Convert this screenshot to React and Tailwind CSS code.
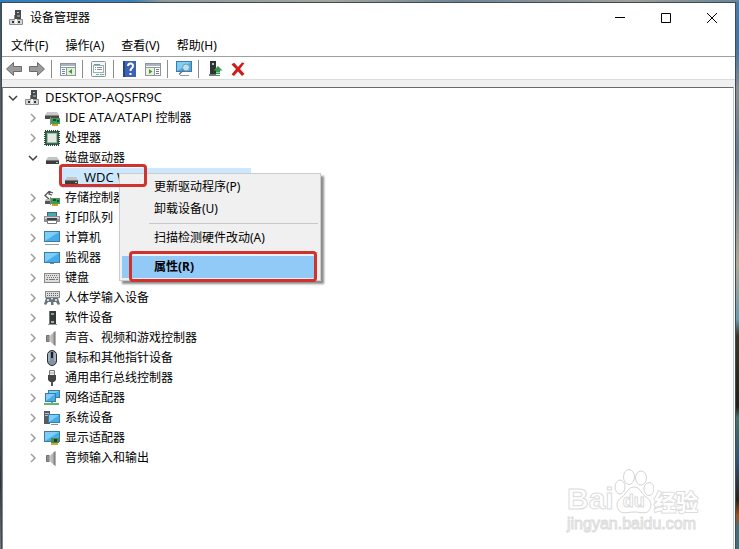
import React from "react";

function Icon({ children, size = "h-4 w-4" }) {
  return (
    <svg viewBox="0 0 16 16" className={`${size} shrink-0`} aria-hidden="true">
      {children}
    </svg>
  );
}

const Board = () => (
  <g>
    <path d="M7 8h9v6H7z" fill="#3f9a55" />
    <path d="M9 9h3v2H9zM13 10h2v2h-2z" fill="#1c4f2c" />
    <path d="M8 14h6v2H8z" fill="#c9a227" />
    <path d="M6 7h1v8H6z" fill="#8a8a8a" />
  </g>
);

const Screen = ({ x = 0, y = 2, w = 16, h = 10 }) => (
  <g>
    <rect x={x + 0.5} y={y + 0.5} width={w - 1} height={h - 1} fill="#45aeea" stroke="#3b7ba5" />
    <path d={`M${x + 1} ${y + h - 1}L${x + w - 1} ${y + 1}H${x + 1}z`} fill="#7fcdf7" />
  </g>
);

const Drive = () => (
  <g>
    <path d="M4 7h9l2 3H2z" fill="#c4c4c4" />
    <path d="M2 10h13v4H2z" fill="#3d3d3d" />
    <path d="M2 10h13v1H2z" fill="#777" />
    <path d="M12 12h2v1h-2z" fill="#8fe08f" />
  </g>
);

const icons = {
  computer: (
    <g>
      <path d="M7 0h6v9H7z" fill="#454b4b" />
      <path d="M9 2h2v1H9z" fill="#bfc9c5" />
      <path d="M9 5h3v2H9z" fill="#7f8c88" />
      <path d="M5 5h1v5h1V5z" fill="#888" />
      <path d="M1.500 9.500h13v5h-13z" fill="#d4d6d6" stroke="#8b8e8e" />
      <path d="M4 11h2v2H4zM10 11h2v2h-2z" fill="#333" />
      <path d="M7 9h2v5H7z" fill="#f4f4f4" />
    </g>
  ),
  ide: (
    <g>
      <path d="M3 2h10l2 3H1z" fill="#c9c9c9" />
      <path d="M1 5h14v4H1z" fill="#4a4a4a" />
      <path d="M1 5h14v1H1z" fill="#888" />
      <Board />
    </g>
  ),
  cpu: (
    <g>
      <rect x="1" y="1" width="14" height="14" fill="#396b50" />
      <rect x="1" y="1" width="14" height="14" fill="none" stroke="#244b37" strokeWidth="2" strokeDasharray="1 1" />
      <rect x="3.500" y="3.500" width="9" height="9" fill="#e4ebe5" stroke="#a7b9ab" />
    </g>
  ),
  drive: <Drive />,
  storage: (
    <g>
      <path d="M9 3L5 1.500 1 5.500l4 3.500M6 1l-1 3 3 1" fill="none" stroke="#555" strokeWidth="1.300" />
      <path d="M2 9h8l1 2H1z" fill="#bbb" />
      <path d="M1 11h8v3H1z" fill="#555" />
      <Board />
    </g>
  ),
  printer: (
    <g>
      <path d="M3 2h10v4H3z" fill="#5a6065" />
      <path d="M4 3h8v4H4z" fill="#3cafb1" />
      <path d="M0 6h16v6H0z" fill="#8b9094" />
      <path d="M1 7h14v2H1z" fill="#d3d6d8" />
      <path d="M3 8h10v2H3z" fill="#3e4246" />
      <path d="M3.500 10.500h9v3h-9z" fill="#fff" stroke="#777" />
    </g>
  ),
  pc: (
    <g>
      <Screen x={0} y={1} w={16} h={11} />
      <path d="M1 14h14v1H1z" fill="#929da5" />
    </g>
  ),
  monitor: (
    <g>
      <Screen x={0} y={2} w={16} h={11} />
      <path d="M6 13h4v1H6z" fill="#7b8b96" />
    </g>
  ),
  keyboard: (
    <g>
      <rect x=".5" y="3.500" width="15" height="9" fill="#dedede" stroke="#888" />
      <path d="M2 5.500h12M3 7.500h11" stroke="#777" strokeDasharray="1 1" />
      <path d="M2 9.500h2m1 0h6m1 0h2" stroke="#777" />
    </g>
  ),
  hid: (
    <g>
      <rect x="1.500" y="1.500" width="14" height="6" fill="#ddd" stroke="#888" />
      <path d="M3 3.500h11M3 5.500h11" stroke="#666" strokeDasharray="1 1" />
      <path d="M2 8h5l1 2 1-2h5l2 6-2 1-2-3H9.500v3H7v-3H4l-2 3-2-1z" fill="#69747c" />
      <path d="M3 9h2v2H3zM11 9h2v2h-2z" fill="#d2dbe0" />
    </g>
  ),
  software: (
    <g>
      <path d="M5 1h7v13H5z" fill="#353a39" />
      <path d="M5 1h1v13H5z" fill="#777" />
      <path d="M7 3h3v2H7z" fill="#77a98b" />
      <path d="M7 11h3v2H7z" fill="#a2b3aa" />
      <path d="M4 14h9v1H4z" fill="#999" />
    </g>
  ),
  speaker: (
    <g>
      <path d="M2.500 5.500h3v6h-3z" fill="#8c8c8c" stroke="#707070" />
      <path d="M6 5.500L11.500 1v15L6 11.500z" fill="#b9b9b9" />
      <path d="M9.500 2.600l2-1.600v15l-2-1.600z" fill="#868686" />
      <path d="M6 5v7" stroke="#e0e0e0" />
    </g>
  ),
  mouse: (
    <g>
      <rect x="3.500" y=".5" width="9" height="15" rx="4.500" fill="#8493a3" stroke="#25303a" />
      <path d="M5 3v8M11 3v8" stroke="#c2ccd5" />
      <path d="M8 2v6" stroke="#182027" strokeWidth="2" />
    </g>
  ),
  usb: (
    <g>
      <path d="M5.500.5h5v5h-5z" fill="#eee" stroke="#777" />
      <path d="M6.500 2.500h1v1h-1zM8.500 2.500h1v1h-1z" fill="#555" />
      <path d="M4 5h8v5l-2 2H6l-2-2z" fill="#444" />
      <path d="M7 12h2v4H7z" fill="#555" />
    </g>
  ),
  network: (
    <g>
      <Screen x={4} y={0} w={12} h={8} />
      <Screen x={1} y={3} w={11} h={9} />
      <path d="M7 12h2v1h6v2H0v-2h7z" fill="#62b575" />
    </g>
  ),
  system: (
    <g>
      <path d="M0 1h6v13H0z" fill="#555d62" />
      <path d="M1 3h4v1H1zM1 5h4v1H1z" fill="#b4bec4" />
      <Screen x={4} y={4} w={12} h={9} />
      <path d="M7 14h7v1H7z" fill="#82909a" />
    </g>
  ),
  display: (
    <g>
      <Screen x={0} y={1} w={16} h={11} />
      <path d="M7 8h8v5H7z" fill="#458d4d" />
      <path d="M10 9h3v3h-3z" fill="#213d28" />
      <path d="M7 13h7v2H7z" fill="#cda936" />
    </g>
  ),
};

const arrowShape = "M.5 8l7-6.500v4h8v5h-8v4z";

const toolbar = [
  [
    { label: "后退", art: <path d={arrowShape} fill="#9b9b9b" stroke="#6b6b6b" /> },
    { label: "前进", art: <path d={arrowShape} transform="matrix(-1 0 0 1 16 0)" fill="#9b9b9b" stroke="#6b6b6b" /> },
  ],
  [
    {
      label: "显示/隐藏控制台树",
      art: (
        <g>
          <rect x=".5" y="2.500" width="15" height="12" fill="#fff" stroke="#8c969e" />
          <path d="M1 3h14v2H1z" fill="#a9b4bd" />
          <path d="M1 6.500h14M6.500 7v7" stroke="#8c969e" />
          <path d="M2 8.500h3M2 10.500h3M2 12.500h3" stroke="#6488aa" />
          <path d="M7 7h8v7H7z" fill="#e5f0d9" />
          <path d="M12 8v5L8.500 10.500z" fill="#4b963c" />
        </g>
      ),
    },
  ],
  [
    {
      label: "属性",
      art: (
        <g>
          <rect x=".5" y=".5" width="14" height="15" rx="1" fill="#f4f6f7" stroke="#87939b" />
          <rect x="2.500" y="4.500" width="10" height="7" fill="#fff" stroke="#a1adb5" />
          <path d="M3 3.500h6M4 6.500h1m1 0h5M4 8.500h1m1 0h5" stroke="#7d929f" />
          <path d="M5 13.500h3m1 0h4" stroke="#6eb2a2" />
        </g>
      ),
    },
  ],
  [
    {
      label: "帮助",
      art: (
        <g>
          <path d="M1 0h13v16H1z" fill="#3c61b5" />
          <path d="M1 0h2v16H1z" fill="#274483" />
          <path d="M6 5q0-2.500 2.500-2.500T11 5Q11 6.500 9.500 7.500 8.500 8.300 8.500 10" fill="none" stroke="#fff" strokeWidth="2" />
          <path d="M7.500 12h2v2h-2z" fill="#fff" />
        </g>
      ),
    },
    {
      label: "显示/隐藏操作窗格",
      art: (
        <g>
          <rect x=".5" y="2.500" width="15" height="12" fill="#fff" stroke="#8c969e" />
          <path d="M1 3h14v2H1z" fill="#a9b4bd" />
          <path d="M1 6.500h14M9.500 7v7" stroke="#8c969e" />
          <path d="M11 8.500h3M11 10.500h3M11 12.500h3" stroke="#777" />
          <path d="M1 7h8v7H1z" fill="#e9f2e1" />
          <path d="M4 8v5l3.500-2.500z" fill="#4b963c" />
        </g>
      ),
    },
  ],
  [
    {
      label: "扫描检测硬件改动",
      art: (
        <g>
          <Screen x={0} y={0} w={16} h={11} />
          <circle cx="10" cy="6.500" r="3.500" fill="#b8e2f2" stroke="#7c9cab" />
          <path d="M7.500 9l-4.500 4.500" stroke="#65767e" strokeWidth="1.500" />
          <path d="M4 14.500h9" stroke="#8a979e" />
        </g>
      ),
    },
  ],
  [
    {
      label: "更新驱动程序",
      art: (
        <g>
          <path d="M3 0h6v13H3z" fill="#2d3432" />
          <path d="M5 2h2v2H5z" fill="#b0c6ba" />
          <path d="M2 13h7v2H2z" fill="#737b78" />
          <path d="M11 5l4.500 4.500H13v2H9v-2H6.500zM9 12h4v1H9zM9 14h4v1H9z" fill="#38994c" />
        </g>
      ),
    },
    {
      label: "卸载设备",
      art: (
        <path d="M1.500 3.500Q3 1.500 4.500 2L8 6l4-4.500 2.500.5L10 8l4.500 5-2.500 2-4-4.500L4 15l-2.500-1.500L6 8z" fill="#cf1b1b" />
      ),
    },
  ],
];

const categories = [
  { latin: "IDE ATA/ATAPI", name: "控制器", icon: "ide" },
  { name: "处理器", icon: "cpu" },
  { name: "磁盘驱动器", icon: "drive", children: [{ name: "WDC W", icon: "drive" }] },
  { name: "存储控制器", icon: "storage" },
  { name: "打印队列", icon: "printer" },
  { name: "计算机", icon: "pc" },
  { name: "监视器", icon: "monitor" },
  { name: "键盘", icon: "keyboard" },
  { name: "人体学输入设备", icon: "hid" },
  { name: "软件设备", icon: "software" },
  { name: "声音、视频和游戏控制器", icon: "speaker" },
  { name: "鼠标和其他指针设备", icon: "mouse" },
  { name: "通用串行总线控制器", icon: "usb" },
  { name: "网络适配器", icon: "network" },
  { name: "系统设备", icon: "system" },
  { name: "显示适配器", icon: "display" },
  { name: "音频输入和输出", icon: "speaker" },
];

function Toggle({ open, name }) {
  return (
    <button aria-label={name} aria-expanded={open} className="flex h-5 w-5 items-center justify-center">
      <svg viewBox="0 0 10 10" className="h-2.5 w-2.5" fill="none" strokeWidth="1.500" aria-hidden="true">
        {open ? <path d="M1 3l4 4 4-4" stroke="#404040" /> : <path d="M3 1l4 4-4 4" stroke="#a0a0a0" />}
      </svg>
    </button>
  );
}

function Label({ icon, latin, children }) {
  return (
    <>
      <span className="ml-px mr-[5px] flex">
        <Icon>{icons[icon]}</Icon>
      </span>
      <span className="whitespace-nowrap">
        {latin && <span className="font-['Open_Sans',sans-serif] text-[13px] leading-4">{latin} </span>}
        {children}
      </span>
    </>
  );
}

function ContextMenu() {
  const item = "flex h-[22px] w-full items-center pl-8 text-left whitespace-nowrap";
  return (
    <div
      role="menu"
      className="absolute left-[57px] top-[5px] z-10 w-[202px] border border-[#cccccc] bg-[#f0f0f0] p-[2px] shadow-[3px_3px_2px_rgba(0,0,0,0.45)]"
    >
      <button role="menuitem" className={item}>更新驱动程序(P)</button>
      <button role="menuitem" className={item}>卸载设备(U)</button>
      <hr className="my-[3px] ml-[27px] border-[#c8c8c8]" />
      <button role="menuitem" className={item}>扫描检测硬件改动(A)</button>
      <hr className="my-[3px] ml-[27px] border-[#c8c8c8]" />
      <div className="relative mr-[2px]">
        <button role="menuitem" className={`${item} bg-[#91c9f7] font-bold`}>属性(R)</button>
        <span className="pointer-events-none absolute -bottom-1 -top-[5px] left-[7px] -right-px rounded-[4px] border-[3px] border-[#d0322d]" />
      </div>
    </div>
  );
}

function Watermark() {
  const thin = "text-white [-webkit-text-stroke:1px_#dcdcdc]";
  const wide = "text-white [-webkit-text-stroke:2px_#dcdcdc] [paint-order:stroke_fill]";
  return (
    <div className="pointer-events-none absolute bottom-[15px] right-[37px] w-[131px]">
      <div className="flex h-[46px] items-end justify-between font-bold">
        <span className={`font-['Liberation_Sans',sans-serif] text-[30px] leading-[30px] ${thin}`}>Bai</span>
        <div className="relative h-[46px] w-[40px] shrink-0">
          <svg viewBox="0 0 40 46" className="h-full w-full" fill="#fff" stroke="#d4d4d4" aria-hidden="true">
            <ellipse cx="6" cy="19" rx="5" ry="7" />
            <ellipse cx="15" cy="9" rx="5.500" ry="7.500" />
            <ellipse cx="27" cy="10" rx="5.500" ry="7" />
            <ellipse cx="35" cy="21" rx="5" ry="6.500" />
            <path d="M20 19c-6 0-7 6-12 10-5 3-6 8-4 12 3 6 9 3 16 3s13 3 16-3c2-4 1-9-4-12-5-4-6-10-12-10z" />
          </svg>
          <span className={`absolute bottom-1 left-[9px] font-['Liberation_Sans',sans-serif] text-[18px] leading-[18px] ${thin}`}>du</span>
        </div>
        <span className={`font-['Noto_Sans_CJK_SC',sans-serif] text-[22px] leading-[28px] ${wide}`}>经验</span>
      </div>
      <div className={`font-['Liberation_Sans',sans-serif] text-[16px] leading-5 ${thin}`}>jingyan.baidu.com</div>
    </div>
  );
}

export default function App() {
  const titleButton = "flex h-[29px] w-[46px] items-center justify-center";
  return (
    <div className="flex min-h-screen flex-col font-['Noto_Sans','Noto_Sans_CJK_SC',sans-serif] text-[12px] leading-5 text-black">
      <div className="h-[2px] bg-[linear-gradient(90deg,#2e7fc0_0%,#3a80b5_18%,#8c9a9c_22%,#a3a699_45%,#6f8597_62%,#a09f96_85%,#66859a_100%)]" />
      <div className="flex flex-1">
        <div className="w-px bg-[linear-gradient(180deg,#35576f_0%,#5a6064_20%,#6a6a6a_70%,#333_88%,#777_100%)]" />
        <div className="relative flex flex-1 flex-col border-x border-t border-[#3f4a52] bg-white">
          <header className="flex h-[29px] items-center">
            <span className="ml-1.5 flex">
              <Icon>{icons.computer}</Icon>
            </span>
            <h1 className="ml-1.5 flex-1">设备管理器</h1>
            <button aria-label="最小化" className={titleButton}>
              <svg viewBox="0 0 10 10" className="h-2.5 w-2.5" stroke="#000" aria-hidden="true"><path d="M0 4.500h10" /></svg>
            </button>
            <button aria-label="最大化" className={titleButton}>
              <svg viewBox="0 0 10 10" className="h-2.5 w-2.5" stroke="#000" fill="none" aria-hidden="true"><path d="M.5.5h9v9h-9z" /></svg>
            </button>
            <button aria-label="关闭" className={titleButton}>
              <svg viewBox="0 0 10 10" className="h-2.5 w-2.5" stroke="#000" aria-hidden="true"><path d="M0 0l10 10M10 0L0 10" /></svg>
            </button>
          </header>

          <nav className="flex h-[25px] items-center gap-px border-b border-[#a0a0a0] pl-px pt-[3px]">
            {["文件(F)", "操作(A)", "查看(V)", "帮助(H)"].map((m) => (
              <button key={m} className="px-2">{m}</button>
            ))}
          </nav>

          <div role="toolbar" aria-label="工具栏" className="flex h-[23px] items-center border-b border-[#dcdcdc] pt-px">
            {toolbar.map((group, i) => (
              <div key={i} className="flex items-center">
                {i > 0 && <span className="ml-[3px] mr-1 h-[18px] w-px bg-[#8c8c8c]" />}
                {group.map((b) => (
                  <button key={b.label} aria-label={b.label} className="flex h-[22px] w-[23px] items-center justify-center">
                    <Icon>{b.art}</Icon>
                  </button>
                ))}
              </div>
            ))}
          </div>

          <div className="h-[7px] bg-[#f0f0f0]" />

          <main className="mr-px flex-1 border-l border-r border-t border-l-[#828790] border-r-[#c3c7cc] border-t-[#696969]">
            <ul role="tree">
              <li role="treeitem" aria-expanded="true">
                <div className="flex h-5 items-center">
                  <Toggle open name="DESKTOP-AQSFR9C" />
                  <Label icon="computer" latin="DESKTOP-AQSFR9C" />
                </div>
                <ul role="group" className="pl-5">
                  {categories.map((c) => (
                    <li key={c.name} role="treeitem" aria-expanded={!!c.children}>
                      <div className="flex h-5 items-center">
                        <Toggle open={!!c.children} name={c.name} />
                        <Label icon={c.icon} latin={c.latin}>{c.name}</Label>
                      </div>
                      {c.children && (
                        <ul role="group" className="pl-[39px]">
                          {c.children.map((d) => (
                            <li key={d.name} role="treeitem" aria-selected="true" className="relative h-5 w-[189px] bg-[#cce8ff]">
                              <div className="flex h-5 items-center">
                                <Label icon={d.icon} latin={d.name} />
                              </div>
                              <ContextMenu />
                              <span className="pointer-events-none absolute -left-[3px] -top-1 z-20 h-[23px] w-[88px] rounded-[4px] border-[3px] border-[#d0322d]" />
                            </li>
                          ))}
                        </ul>
                      )}
                    </li>
                  ))}
                </ul>
              </li>
            </ul>
          </main>
          <Watermark />
        </div>
        <div className="w-[3px] bg-[linear-gradient(180deg,#4a7ba8_0%,#47719a_8%,#8a8e90_16%,#67798a_28%,#b0a898_48%,#719aaa_58%,#3c3428_61%,#222019_74%,#4b6e67_76%,#35506e_84%,#2a2018_91%,#9b5529_94%,#496b75_96%)]" />
      </div>
    </div>
  );
}
